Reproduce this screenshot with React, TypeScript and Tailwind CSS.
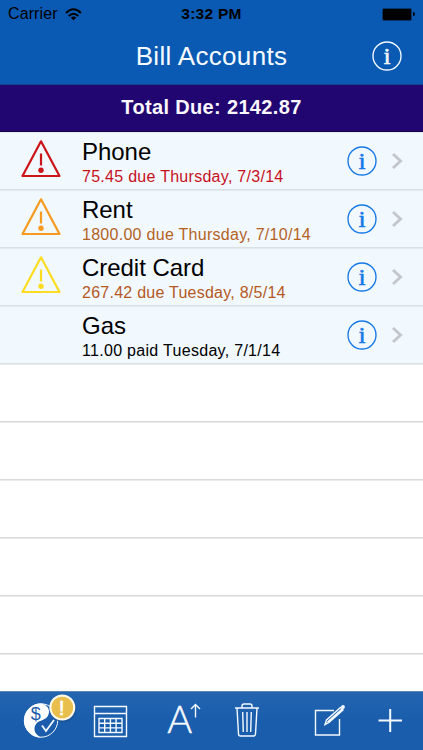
import React from "react";

const bills = [
  { name: "Phone", detail: "75.45 due Thursday, 7/3/14", icon: "#cb1518", text: "text-[#c8101c]", track: "tracking-[0.28px]" },
  { name: "Rent", detail: "1800.00 due Thursday, 7/10/14", icon: "#f69a20", text: "text-[#b5621f]", track: "tracking-[0.28px]" },
  { name: "Credit Card", detail: "267.42 due Tuesday, 8/5/14", icon: "#fbdc20", text: "text-[#b5581f]", track: "tracking-[0.25px]" },
  { name: "Gas", detail: "11.00 paid Tuesday, 7/1/14", icon: null, text: "text-black", track: "tracking-[0.3px]" },
];

function Info({ color }: { color: string }) {
  return (
    <svg width="30" height="30" viewBox="0 0 30 30" className="shrink-0">
      <circle cx="15" cy="15" r="14" fill="none" stroke={color} strokeWidth="1.35" />
      <text x="15" y="22.7" textAnchor="middle" fontSize="24" fill={color} className="font-['Liberation_Serif',serif]" stroke={color} strokeWidth="0.7">i</text>
    </svg>
  );
}

function Warning({ color }: { color: string }) {
  return (
    <svg width="42" height="40" viewBox="0 0 42 40" fill="none" stroke={color} strokeWidth="2.2">
      <path d="M21 2.3 39.5 37H2.5Z" strokeLinejoin="round" />
      <path d="M21 14.500v12" />
      <circle cx="21" cy="31.3" r="2.7" fill={color} stroke="none" />
    </svg>
  );
}

function Toolbar() {
  return (
    <footer className="h-[59px] border-t border-[#5b86b5] bg-linear-to-b from-[#2465b0] to-[#195dac] to-50% shrink-0">
      <svg width="423" height="58" viewBox="0 692 423 58" fill="none" stroke="#f4faff" strokeWidth="1.4">
        <g>
          <circle cx="41" cy="720.5" r="16.7" fill="#1b5dac" strokeWidth="1" />
          <path d="M41 703.5a17 17 0 0 0 0 34c-4-2-6.5-5-6.5-8.500c0-5 3.500-7.500 7-8.500c4.500-1.500 7.500-4.500 7.500-9c0-4-3-7-8-8Z" fill="#fff" stroke="none" />
          <text x="35.700" y="719.700" textAnchor="middle" fontSize="18" fill="#1b5dac" stroke="none" className="font-['Liberation_Sans',sans-serif]">$</text>
          <path d="m42 725.500 4 5.500 8-11" strokeWidth="1.8" />
          <circle cx="63.200" cy="709" r="13.300" fill="#174d8e" opacity=".5" stroke="none" />
          <circle cx="62.300" cy="707.500" r="11.900" fill="#e8bf4d" stroke="#fff8e6" strokeWidth="2.200" />
          <text x="61.700" y="715" textAnchor="middle" fontSize="21" fill="#fff" stroke="#fff" strokeWidth=".6" className="font-['Liberation_Sans',sans-serif]">!</text>
        </g>
        <g strokeWidth="1.4">
          <path d="M94.500 706.500h32v30h-32Zm0 7h32" />
          <path d="M99 718.500h23v14H99Zm0 4.700h23m-23 4.700h23M104.700 718.500v14m5.700-14v14m5.700-14v14" />
        </g>
        <text x="179.700" y="733" textAnchor="middle" fontSize="38" fill="#f4faff" strokeWidth=".5" className="font-['Lato',sans-serif] font-light">A</text>
        <path d="M195.500 717.500v-13m-4.500 4.500 4.500-4.500 4.500 4.500" />
        <path d="M235 708h24M242 708v-2q0-2 2-2h6q2 0 2 2v2M237 708l1.500 26q.1 2 2 2h13q1.900 0 2-2l1.500-26M242.700 712l.6 20M247 712v20M251.300 712l-.6 20" />
        <path d="M334 710.500h-18.500v24.500H339.500v-16" strokeWidth="1.4" />
        <path d="m325 724.500 1.500-4.500 14-12.500 2.500 2.500-14 12.500Zm2.500-2.500 14-12.500" strokeWidth="1.4" />
        <circle cx="343" cy="707" r="1.900" fill="#f4faff" stroke="none" />
        <path d="M378.500 720.500h23.500M390.200 709v23" strokeWidth="2" />
      </svg>
    </footer>
  );
}

export default function App() {
  return (
    <main className="flex h-[750px] w-[423px] flex-col overflow-hidden bg-white font-['Liberation_Sans',Arial,sans-serif]">
      <header className="h-[84px] shrink-0 bg-[#0a5ab4]">
        <div className="grid h-7 grid-cols-[1fr_auto_1fr] items-center px-2 text-base leading-7">
          <div className="flex items-center gap-[7px]">
            <span className="tracking-[0.1px]">Carrier</span>
            <svg width="17" height="13" viewBox="0 0 17 13" fill="none" stroke="black" strokeWidth="2">
              <path d="M1 5q7.500-7.400 15 0M3.700 8q4.800-4.600 9.600 0" />
              <path d="m8.500 12.500-2.800-2.900q2.800-2.200 5.600 0Z" fill="black" stroke="none" />
            </svg>
          </div>
          <strong className="text-[15.500px] tracking-[0.25px]">3:32 PM</strong>
          <div className="flex items-center justify-end">
            <span className="h-[13px] w-[30px] rounded-[2px] border border-[#06366d] bg-black" />
            <span className="ml-px h-1 w-[2px] rounded-r-full bg-black" />
          </div>
        </div>
        <div className="grid h-14 grid-cols-[1fr_auto_1fr] items-center pr-[21px] pl-[21px]">
          <span />
          <h1 className="text-[26px] leading-14 tracking-[0.33px] text-[#f5faff]">Bill Accounts</h1>
          <div className="flex justify-end"><Info color="#f4faff" /></div>
        </div>
      </header>
      <div className="h-12 shrink-0 border-t border-b border-t-[#17408d] border-b-[#140046] bg-[#210570] text-center text-[20px] leading-[44px] font-bold tracking-[0.34px] text-[#fbf7ff]">Total Due: 2142.87</div>
      <section className="h-[559px] shrink-0 overflow-hidden">
        {bills.map((bill) => (
          <article key={bill.name} className="flex h-[58px] items-center border-t border-b border-t-[#e5eaef] border-b-[#dbe0e6] bg-[#f1f8fe] pr-5 pl-5">
            <div className="w-[62px] pb-1">{bill.icon && <Warning color={bill.icon} />}</div>
            <div className="flex-1 pt-[5px] whitespace-nowrap">
              <h2 className="text-[24px] leading-[26px] tracking-[-0.04px] text-black">{bill.name}</h2>
              <p className={`text-base leading-[23px] ${bill.text} ${bill.track}`}>{bill.detail}</p>
            </div>
            <Info color="#1678e6" />
            <svg className="ml-[14px]" width="12" height="18" viewBox="0 0 12 18" fill="none" stroke="#c3c7cb" strokeWidth="2.900"><path d="m2 2 7.500 7L2 16" /></svg>
          </article>
        ))}
        {[0, 1, 2, 3, 4, 5].map((row) => <div key={row} className="h-[58px] border-t border-b border-t-[#ebebed] border-b-[#d9d9db]" />)}
      </section>
      <Toolbar />
    </main>
  );
}
